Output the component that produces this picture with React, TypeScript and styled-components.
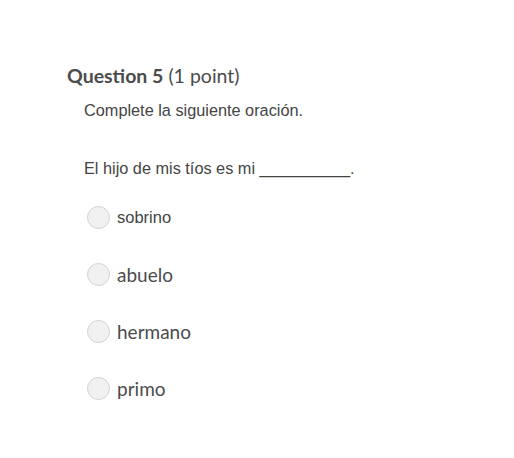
import React from 'react';
import styled, { createGlobalStyle } from 'styled-components';

const options = [
  { label: 'sobrino', plain: true },
  { label: 'abuelo' },
  { label: 'hermano' },
  { label: 'primo' },
];

function App() {
  return (
    <>
      <GlobalStyle />
      <Page>
        <Heading>
          <strong>Question 5</strong> (1 point)
        </Heading>
        <Body>
          <Prompt>Complete la siguiente oración.</Prompt>
          <Prompt>El hijo de mis tíos es mi __________.</Prompt>
          <Options>
            {options.map((o) => (
              <Option key={o.label}>
                <Radio />
                <Label $plain={o.plain}>{o.label}</Label>
              </Option>
            ))}
          </Options>
        </Body>
      </Page>
    </>
  );
}

export default App;

const GlobalStyle = createGlobalStyle`
  html, body {
    margin: 0;
    background: #ffffff;
  }
`;

const Page = styled.div`
  width: 514px;
  height: 458px;
  padding: 64px 0 0 67px;
  box-sizing: border-box;
`;

const Heading = styled.h2`
  margin: 0;
  font-family: Lato, sans-serif;
  font-size: 19.5px;
  font-weight: 400;
  line-height: 24px;
  color: #4b4b4b;
  & strong {
    font-weight: 700;
  }
`;

const Body = styled.div`
  padding: 13px 0 0 17px;
`;

const Prompt = styled.p`
  margin: 0 0 39px;
  font-family: 'Liberation Sans', Arial, sans-serif;
  font-size: 16.3px;
  line-height: 19px;
  color: #444;
  &:last-of-type {
    margin-bottom: 28px;
  }
`;

const Options = styled.div`
  display: flex;
  flex-direction: column;
  gap: 34px;
`;

const Option = styled.label`
  display: flex;
  align-items: center;
  gap: 7px;
  height: 23px;
`;

const Radio = styled.span`
  width: 23px;
  height: 23px;
  box-sizing: border-box;
  margin-left: 3px;
  border-radius: 50%;
  border: 1px solid #d2d2d2;
  background: #f1f1f1;
`;

const Label = styled.span<{ $plain?: boolean }>`
  font-family: ${(p) => (p.$plain ? "'Liberation Sans', Arial, sans-serif" : 'Lato, sans-serif')};
  font-size: ${(p) => (p.$plain ? '16.5px' : '19px')};
  color: ${(p) => (p.$plain ? '#444' : '#4b4b4b')};
`;
